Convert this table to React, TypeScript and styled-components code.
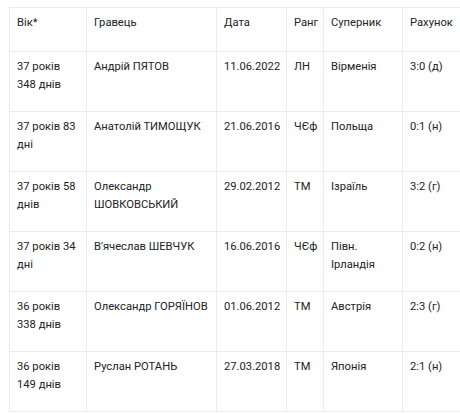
import React from "react";
import styled, { createGlobalStyle } from "styled-components";

const GlobalStyle = createGlobalStyle`
  html, body {
    margin: 0;
    padding: 0;
    overflow: hidden;
    background: #fff;
  }
  body {
    font-family: Roboto, "Liberation Sans", Arial, sans-serif;
    color: #222;
  }
`;

type Record = {
  age: string;
  player: string;
  date: string;
  rank: string;
  rival: string;
  score: string;
};

const RECORDS: Record[] = [
  { age: "37 років 348 днів", player: "Андрій ПЯТОВ", date: "11.06.2022", rank: "ЛН", rival: "Вірменія", score: "3:0 (д)" },
  { age: "37 років 83 дні", player: "Анатолій ТИМОЩУК", date: "21.06.2016", rank: "ЧЄф", rival: "Польща", score: "0:1 (н)" },
  { age: "37 років 58 днів", player: "Олександр ШОВКОВСЬКИЙ", date: "29.02.2012", rank: "ТМ", rival: "Ізраїль", score: "3:2 (г)" },
  { age: "37 років 34 дні", player: "В'ячеслав ШЕВЧУК", date: "16.06.2016", rank: "ЧЄф", rival: "Півн. Ірландія", score: "0:2 (н)" },
  { age: "36 років 338 днів", player: "Олександр ГОРЯЇНОВ", date: "01.06.2012", rank: "ТМ", rival: "Австрія", score: "2:3 (г)" },
  { age: "36 років 149 днів", player: "Руслан РОТАНЬ", date: "27.03.2018", rank: "ТМ", rival: "Японія", score: "2:1 (н)" },
];

const COLUMNS = [
  { title: "Вік*", width: 77 },
  { title: "Гравець", width: 130 },
  { title: "Дата", width: 70 },
  { title: "Ранг", width: 37 },
  { title: "Суперник", width: 79 },
  { title: "Рахунок", width: 62 },
];

const Wrap = styled.div`
  padding: 7px 0 0 9px;
`;

const Table = styled.table`
  border-collapse: collapse;
  table-layout: fixed;
  width: 455px;
  font-size: 11.2px;
  line-height: 18px;
`;

const HeadRow = styled.tr`
  height: 44px;
`;

const Row = styled.tr`
  height: 60px;
`;

const Head = styled.th`
  border: 1px solid #ececec;
  padding: 6px 7px 0 7px;
  vertical-align: top;
  text-align: left;
  font-weight: 400;
`;

const Cell = styled.td`
  border: 1px solid #ececec;
  padding: 6px 7px 0 7px;
  vertical-align: top;
  text-align: left;
`;

export default function App() {
  return (
    <>
      <GlobalStyle />
      <Wrap>
        <Table>
          <colgroup>
            {COLUMNS.map((c) => (
              <col key={c.title} style={{ width: c.width }} />
            ))}
          </colgroup>
          <thead>
            <HeadRow>
              {COLUMNS.map((c) => (
                <Head key={c.title}>{c.title}</Head>
              ))}
            </HeadRow>
          </thead>
          <tbody>
            {RECORDS.map((r) => (
              <Row key={r.player}>
                <Cell>{r.age}</Cell>
                <Cell>{r.player}</Cell>
                <Cell>{r.date}</Cell>
                <Cell>{r.rank}</Cell>
                <Cell>{r.rival}</Cell>
                <Cell>{r.score}</Cell>
              </Row>
            ))}
          </tbody>
        </Table>
      </Wrap>
    </>
  );
}
